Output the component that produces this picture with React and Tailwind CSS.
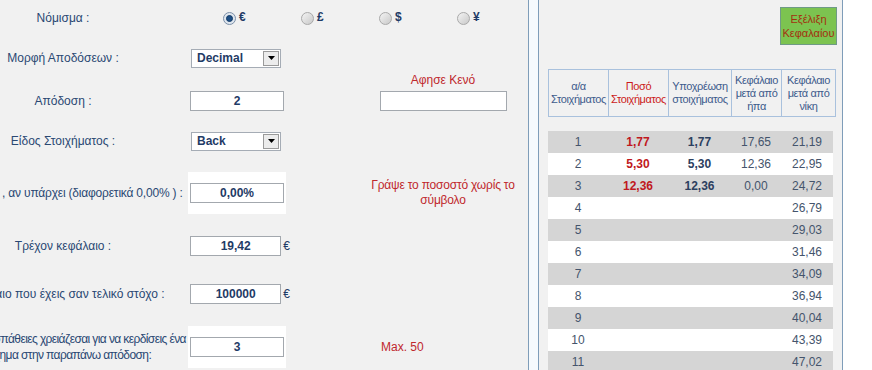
import React from 'react'

const labelCls = 'w-[254px] shrink-0 text-center text-[12px] leading-[15px] text-[#2a4873] whitespace-nowrap'
const inputCls = 'w-[94px] h-[20px] border border-[#a3a8ae] bg-white flex items-center justify-center text-[12px] font-bold text-[#1f3b66]'

function Radio({ checked }) {
  return (
    <span className={'w-[13px] h-[13px] rounded-full border flex items-center justify-center ' + (checked ? 'border-[#7b8fa8] bg-[#dfe6ee]' : 'border-[#a9a9a9] bg-gradient-to-br from-[#f4f4f4] to-[#c9c9c9]')}>
      {checked && <span className="w-[7px] h-[7px] rounded-full bg-[#1d4f86] border border-[#123a66]" />}
    </span>
  )
}

function Select({ value }) {
  return (
    <div className="ml-[1px] w-[90px] h-[19px] border border-[#a5acb5] bg-white flex items-center justify-between">
      <span className="pl-[5px] text-[12px] font-bold text-[#1f3b66]">{value}</span>
      <span className="mr-[1px] w-[16px] h-[15px] border border-[#9a9a9a] bg-[#ececec] flex items-center justify-center">
        <svg width="7" height="4" viewBox="0 0 7 4"><path d="M0 0h7L3.5 4z" fill="#000" /></svg>
      </span>
    </div>
  )
}

function Row({ h, label, labelExtra = '', children, note, noteTop = false }) {
  return (
    <div className={'flex items-center ' + h}>
      <div className={labelCls + ' ' + labelExtra}>{label}</div>
      <div className="w-[100px] shrink-0 flex items-center">{children}</div>
      <div className={'ml-[63px] w-[180px] shrink-0 ' + (noteTop ? 'self-start' : '')}>{note}</div>
    </div>
  )
}

const rows = [
  ['1', '1,77', '1,77', '17,65', '21,19'],
  ['2', '5,30', '5,30', '12,36', '22,95'],
  ['3', '12,36', '12,36', '0,00', '24,72'],
  ['4', '', '', '', '26,79'],
  ['5', '', '', '', '29,03'],
  ['6', '', '', '', '31,46'],
  ['7', '', '', '', '34,09'],
  ['8', '', '', '', '36,94'],
  ['9', '', '', '', '40,04'],
  ['10', '', '', '', '43,39'],
  ['11', '', '', '', '47,02'],
]

export default function App() {
  return (
    <div className="w-[872px] h-[370px] overflow-hidden flex bg-white font-['Liberation_Sans',Arial,sans-serif]">
      {/* left form panel */}
      <div className="w-[529px] shrink-0 h-full bg-[#f1f1f1] border-r border-[#7f9db9] overflow-hidden">
        <div className="ml-[-64px]">
          <div className="flex items-center h-[36px]">
            <div className={labelCls}>Νόμισμα :</div>
            <div className="ml-[33px] flex">
              {['€', '£', '$', '¥'].map((c, i) => (
                <div key={c} className="w-[78px] flex items-center gap-[3px]">
                  <Radio checked={i === 0} />
                  <span className="text-[12px] font-bold text-[#1f3b66] -mt-[3px]">{c}</span>
                </div>
              ))}
            </div>
          </div>

          <Row h="h-[44px]" label="Μορφή Αποδόσεων :">
            <Select value="Decimal" />
          </Row>

          <Row
            h="h-[42px]"
            label="Απόδοση :"
            noteTop
            note={
              <div className="-mt-[7px] flex flex-col items-center">
                <div className="h-[14px] leading-[14px] text-[12px] text-[#c0282d]">Αφησε Κενό</div>
                <div className="mt-[4px] w-[127px] h-[20px] border border-[#a3a8ae] bg-white" />
              </div>
            }
          >
            <div className={inputCls}>2</div>
          </Row>

          <Row h="h-[38px]" label="Είδος Στοιχήματος :">
            <Select value="Back" />
          </Row>

          <Row
            h="h-[66px]"
            label="Προμήθεια , αν υπάρχει (διαφορετικά 0,00% ) :"
            labelExtra="tracking-[-0.2px]"
            note={
              <div className="text-center text-[12px] leading-[15px] text-[#c0282d] tracking-[-0.2px]">
                Γράψε το ποσοστό χωρίς το<br />σύμβολο
              </div>
            }
          >
            <div className="-ml-[2px] w-[98px] py-[11px] bg-white">
              <div className={inputCls + ' ml-[2px]'}>0,00%</div>
            </div>
          </Row>

          <Row h="h-[40px]" label="Τρέχον κεφάλαιο :">
            <div className={inputCls}>19,42</div>
            <span className="ml-[2px] text-[12px] text-[#1f3b66]">€</span>
          </Row>

          <Row h="h-[56px]" label="Κεφάλαιο που έχεις σαν τελικό στόχο :">
            <div className={inputCls}>100000</div>
            <span className="ml-[2px] text-[12px] text-[#1f3b66]">€</span>
          </Row>

          <Row
            h="h-[50px]"
            label={<>Πόσες προσπάθειες χρειάζεσαι για να κερδίσεις ένα<br />στοίχημα στην παραπάνω απόδοση:</>}
            labelExtra="tracking-[-0.6px] leading-[16px]"
            note={<div className="pl-[28px] text-[12px] text-[#c0282d]">Max. 50</div>}
          >
            <div className="-ml-[2px] w-[98px] py-[11px] bg-white">
              <div className={inputCls + ' ml-[2px]'}>3</div>
            </div>
          </Row>
        </div>
      </div>

      <div className="w-[9px] shrink-0 h-full bg-[#f6fafd]" />

      {/* right table panel */}
      <div className="w-[305px] shrink-0 h-full bg-[#f1f1f1] border-x border-[#7f9db9] pl-[9px]">
        <div className="flex justify-end pr-[5px] pt-[7px]">
          <div className="w-[57px] h-[38px] bg-[#7cc350] border border-[#6f9a86] flex items-center justify-center text-center text-[11px] leading-[14px] text-[#a3300f]">
            Εξέλιξη<br />Κεφαλαίου
          </div>
        </div>

        <table className="mt-[24px] table-fixed w-[287px] border-collapse text-[11px] leading-[13px] text-[#3d5b8c] tracking-[-0.4px]">
          <colgroup>
            <col className="w-[60px]" />
            <col className="w-[60px]" />
            <col className="w-[63px]" />
            <col className="w-[50px]" />
            <col className="w-[54px]" />
          </colgroup>
          <tbody>
            <tr className="h-[47px] text-center">
              <td className="border border-[#a9c1dd] px-0">α/α<br />Στοιχήματος</td>
              <td className="border border-[#a9c1dd] px-0 text-[#cc1a1a]">Ποσό<br />Στοιχήματος</td>
              <td className="border border-[#a9c1dd] px-0">Υποχρέωση<br />στοιχήματος</td>
              <td className="border border-[#a9c1dd] px-0">Κεφάλαιο<br />μετά από<br />ήπα</td>
              <td className="border border-[#a9c1dd] px-0">Κεφάλαιο<br />μετά από<br />νίκη</td>
            </tr>
          </tbody>
        </table>

        <div className="mt-[14px] w-[285px]">
          {rows.map((r, i) => (
            <div
              key={r[0]}
              className={'h-[22px] grid grid-cols-[60px_60px_63px_50px_52px] items-center text-center text-[12px] text-[#44546c] ' + (i % 2 === 0 ? 'bg-[#d5d5d5]' : 'bg-white')}
            >
              <span>{r[0]}</span>
              <span className="font-bold text-[#c01820]">{r[1]}</span>
              <span className="font-bold text-[#2c4060]">{r[2]}</span>
              <span>{r[3]}</span>
              <span>{r[4]}</span>
            </div>
          ))}
        </div>
      </div>

      <div className="flex-1 h-full bg-white" />
    </div>
  )
}
